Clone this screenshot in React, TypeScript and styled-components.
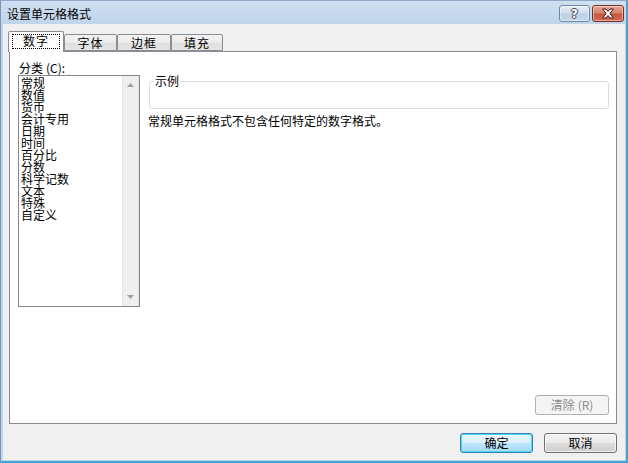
import React from "react";
import styled, { createGlobalStyle } from "styled-components";

const Global = createGlobalStyle`
  html, body { margin: 0; padding: 0; background: #fff; }
  body {
    font-family: "Noto Sans CJK SC", "Noto Sans", sans-serif;
    font-size: 12px;
    color: #000;
  }
  * { box-sizing: border-box; }
`;

const Window = styled.div`
  width: 628px;
  height: 463px;
  display: flex;
  flex-direction: column;
  background: linear-gradient(180deg, #cfdff1 0px, #bfd3ea 24px, #c0d4ea 100%);
  border-left: 1px solid #7a96b6;
  border-top: 1px solid #8fa9c6;
  border-right: 2px solid #3ea6d6;
  border-bottom: 2px solid #3ea6d6;
  padding: 0 1px 1px 2px;
`;

const TitleBar = styled.div`
  height: 23px;
  flex: none;
  display: flex;
  align-items: flex-start;
  padding: 4px 1px 0 4px;
`;

const Title = styled.div`
  flex: 1;
  line-height: 16px;
  padding-top: 1px;
  font-size: 12px;
  color: #000;
`;

const CaptionButton = styled.div<{ $kind: "help" | "close" }>`
  width: ${(p) => (p.$kind === "close" ? 32 : 31)}px;
  height: 17px;
  margin-left: ${(p) => (p.$kind === "close" ? 2 : 0)}px;
  border: 1px solid ${(p) => (p.$kind === "close" ? "#7a2f22" : "#6f87a6")};
  border-radius: 3px;
  display: flex;
  align-items: center;
  justify-content: center;
  background: ${(p) =>
    p.$kind === "close"
      ? "linear-gradient(180deg, #e9a899 0%, #d8826f 45%, #c65a42 55%, #d06a4f 100%)"
      : "linear-gradient(180deg, #e6eef8 0%, #cfdcec 45%, #bccfe6 55%, #c8d8ec 100%)"};
  box-shadow: inset 0 0 0 1px rgba(255, 255, 255, 0.45);
`;

const HelpGlyph = styled.span`
  font-family: "DejaVu Sans", sans-serif;
  font-weight: bold;
  font-size: 12px;
  line-height: 12px;
  color: #fff;
  text-shadow: -1px 0 #3b4a5e, 1px 0 #3b4a5e, 0 -1px #3b4a5e, 0 1px #3b4a5e;
`;

const Client = styled.div`
  flex: 1;
  display: flex;
  flex-direction: column;
  background: #f0f0f0;
  padding: 7px 8px 7px 5px;
`;

const TabRow = styled.div`
  display: flex;
  align-items: flex-end;
  height: 20px;
  flex: none;
`;

const Tab = styled.div<{ $w: number; $active?: boolean }>`
  width: ${(p) => p.$w}px;
  height: ${(p) => (p.$active ? 21 : 17)}px;
  margin-bottom: ${(p) => (p.$active ? -1 : 0)}px;
  position: relative;
  z-index: ${(p) => (p.$active ? 1 : 0)};
  border: 1px solid #898c95;
  border-bottom: ${(p) => (p.$active ? "none" : "1px solid #898c95")};
  border-radius: 2px 2px 0 0;
  background: ${(p) =>
    p.$active ? "#fff" : "linear-gradient(180deg, #f3f3f3 0%, #ebebeb 50%, #dedede 51%, #e5e5e5 100%)"};
  display: flex;
  align-items: center;
  justify-content: center;
  line-height: 12px;
  letter-spacing: 1px;
  padding-bottom: ${(p) => (p.$active ? 1 : 0)}px;
`;

const FocusLabel = styled.span`
  width: 48px;
  height: 15px;
  border: 1px dotted #000;
  display: flex;
  align-items: center;
  justify-content: center;
  margin-top: -1px;
`;

const Mnemonic = styled.span`
  margin-left: 3px;
`;

const Panel = styled.div`
  flex: 1;
  margin-left: 1px;
  border: 1px solid #898c95;
  background: #fff;
  display: flex;
  padding: 10px 7px 8px 8px;
`;

const LeftColumn = styled.div`
  width: 122px;
  flex: none;
  display: flex;
  flex-direction: column;
`;

const Label = styled.div`
  line-height: 12px;
  padding-left: 1px;
  margin-bottom: 1px;
`;

const ListBox = styled.div`
  height: 232px;
  border: 1px solid #828790;
  display: flex;
`;

const Items = styled.div`
  flex: 1;
  padding: 1px 0 0 2px;
`;

const Item = styled.div`
  line-height: 12px;
  height: 12px;
  white-space: nowrap;
`;

const ScrollBar = styled.div`
  width: 17px;
  flex: none;
  background: #efefef;
  border-left: 1px solid #e6e6e6;
  border-right: 1px solid #e2e2e2;
  display: flex;
  flex-direction: column;
  justify-content: space-between;
  align-items: center;
  padding: 7px 0 7px;
`;

const RightColumn = styled.div`
  flex: 1;
  margin-left: 8px;
  display: flex;
  flex-direction: column;
`;

const Group = styled.fieldset`
  margin: 13px 0 0 1px;
  padding: 0 0 0 4px;
  border: 1px solid #d5dfe5;
  border-radius: 3px;
  min-width: 0;
`;

const Legend = styled.legend`
  padding: 0 1px;
  line-height: 12px;
`;

const GroupBody = styled.div`
  height: 21px;
`;

const Description = styled.div`
  margin-top: 6px;
  line-height: 12px;
`;

const Button = styled.div<{ $default?: boolean; $disabled?: boolean; $w: number }>`
  width: ${(p) => p.$w}px;
  height: 20px;
  border-radius: 3px;
  display: flex;
  align-items: center;
  justify-content: center;
  line-height: 12px;
  color: ${(p) => (p.$disabled ? "#8c8c8c" : "#000")};
  border: 1px solid ${(p) => (p.$disabled ? "#adb2b5" : p.$default ? "#3c7fb1" : "#707070")};
  background: ${(p) =>
    p.$disabled
      ? "#f4f4f4"
      : p.$default
      ? "linear-gradient(180deg, #eaf6fd 0%, #d9f0fc 50%, #bee6fd 51%, #a7d9f5 100%)"
      : "linear-gradient(180deg, #f2f2f2 0%, #ebebeb 50%, #dddddd 51%, #cfcfcf 100%)"};
  box-shadow: ${(p) =>
    p.$default ? "inset 0 0 0 1px #48d8f8" : p.$disabled ? "none" : "inset 0 0 0 1px rgba(255,255,255,0.7)"};
`;

const ClearButton = styled(Button)`
  margin-top: auto;
  align-self: flex-end;
`;

const Footer = styled.div`
  flex: none;
  margin-top: 9px;
  display: flex;
  justify-content: flex-end;
  gap: 11px;
`;

const categories = [
  "常规",
  "数值",
  "货币",
  "会计专用",
  "日期",
  "时间",
  "百分比",
  "分数",
  "科学记数",
  "文本",
  "特殊",
  "自定义",
];

const Arrow = ({ down }: { down?: boolean }) => (
  <svg width="7" height="4" viewBox="0 0 7 4">
    <path d={down ? "M0 0 H7 L3.5 4 Z" : "M0 4 H7 L3.5 0 Z"} fill="#a0a0a0" />
  </svg>
);

const CloseGlyph = () => (
  <svg width="14" height="11" viewBox="0 0 14 11">
    <path
      d="M1.5 1 H5 L7 3.5 L9 1 H12.5 L8.8 5.5 L12.5 10 H9 L7 7.5 L5 10 H1.5 L5.2 5.5 Z"
      fill="#fff"
      stroke="#4a1c14"
      strokeWidth="1"
      strokeLinejoin="round"
    />
  </svg>
);

export default function App() {
  return (
    <>
      <Global />
      <Window>
        <TitleBar>
          <Title>设置单元格格式</Title>
          <CaptionButton $kind="help">
            <HelpGlyph>?</HelpGlyph>
          </CaptionButton>
          <CaptionButton $kind="close">
            <CloseGlyph />
          </CaptionButton>
        </TitleBar>
        <Client>
          <TabRow>
            <Tab $w={56} $active>
              <FocusLabel>数字</FocusLabel>
            </Tab>
            <Tab $w={53}>字体</Tab>
            <Tab $w={54}>边框</Tab>
            <Tab $w={52}>填充</Tab>
          </TabRow>
          <Panel>
            <LeftColumn>
              <Label>
                分类<Mnemonic>(C)</Mnemonic>:
              </Label>
              <ListBox>
                <Items>
                  {categories.map((c) => (
                    <Item key={c}>{c}</Item>
                  ))}
                </Items>
                <ScrollBar>
                  <Arrow />
                  <Arrow down />
                </ScrollBar>
              </ListBox>
            </LeftColumn>
            <RightColumn>
              <Group>
                <Legend>示例</Legend>
                <GroupBody />
              </Group>
              <Description>常规单元格格式不包含任何特定的数字格式。</Description>
              <ClearButton $w={74} $disabled>
                清除<Mnemonic>(R)</Mnemonic>
              </ClearButton>
            </RightColumn>
          </Panel>
          <Footer>
            <Button $w={73} $default>
              确定
            </Button>
            <Button $w={73}>取消</Button>
          </Footer>
        </Client>
      </Window>
    </>
  );
}
